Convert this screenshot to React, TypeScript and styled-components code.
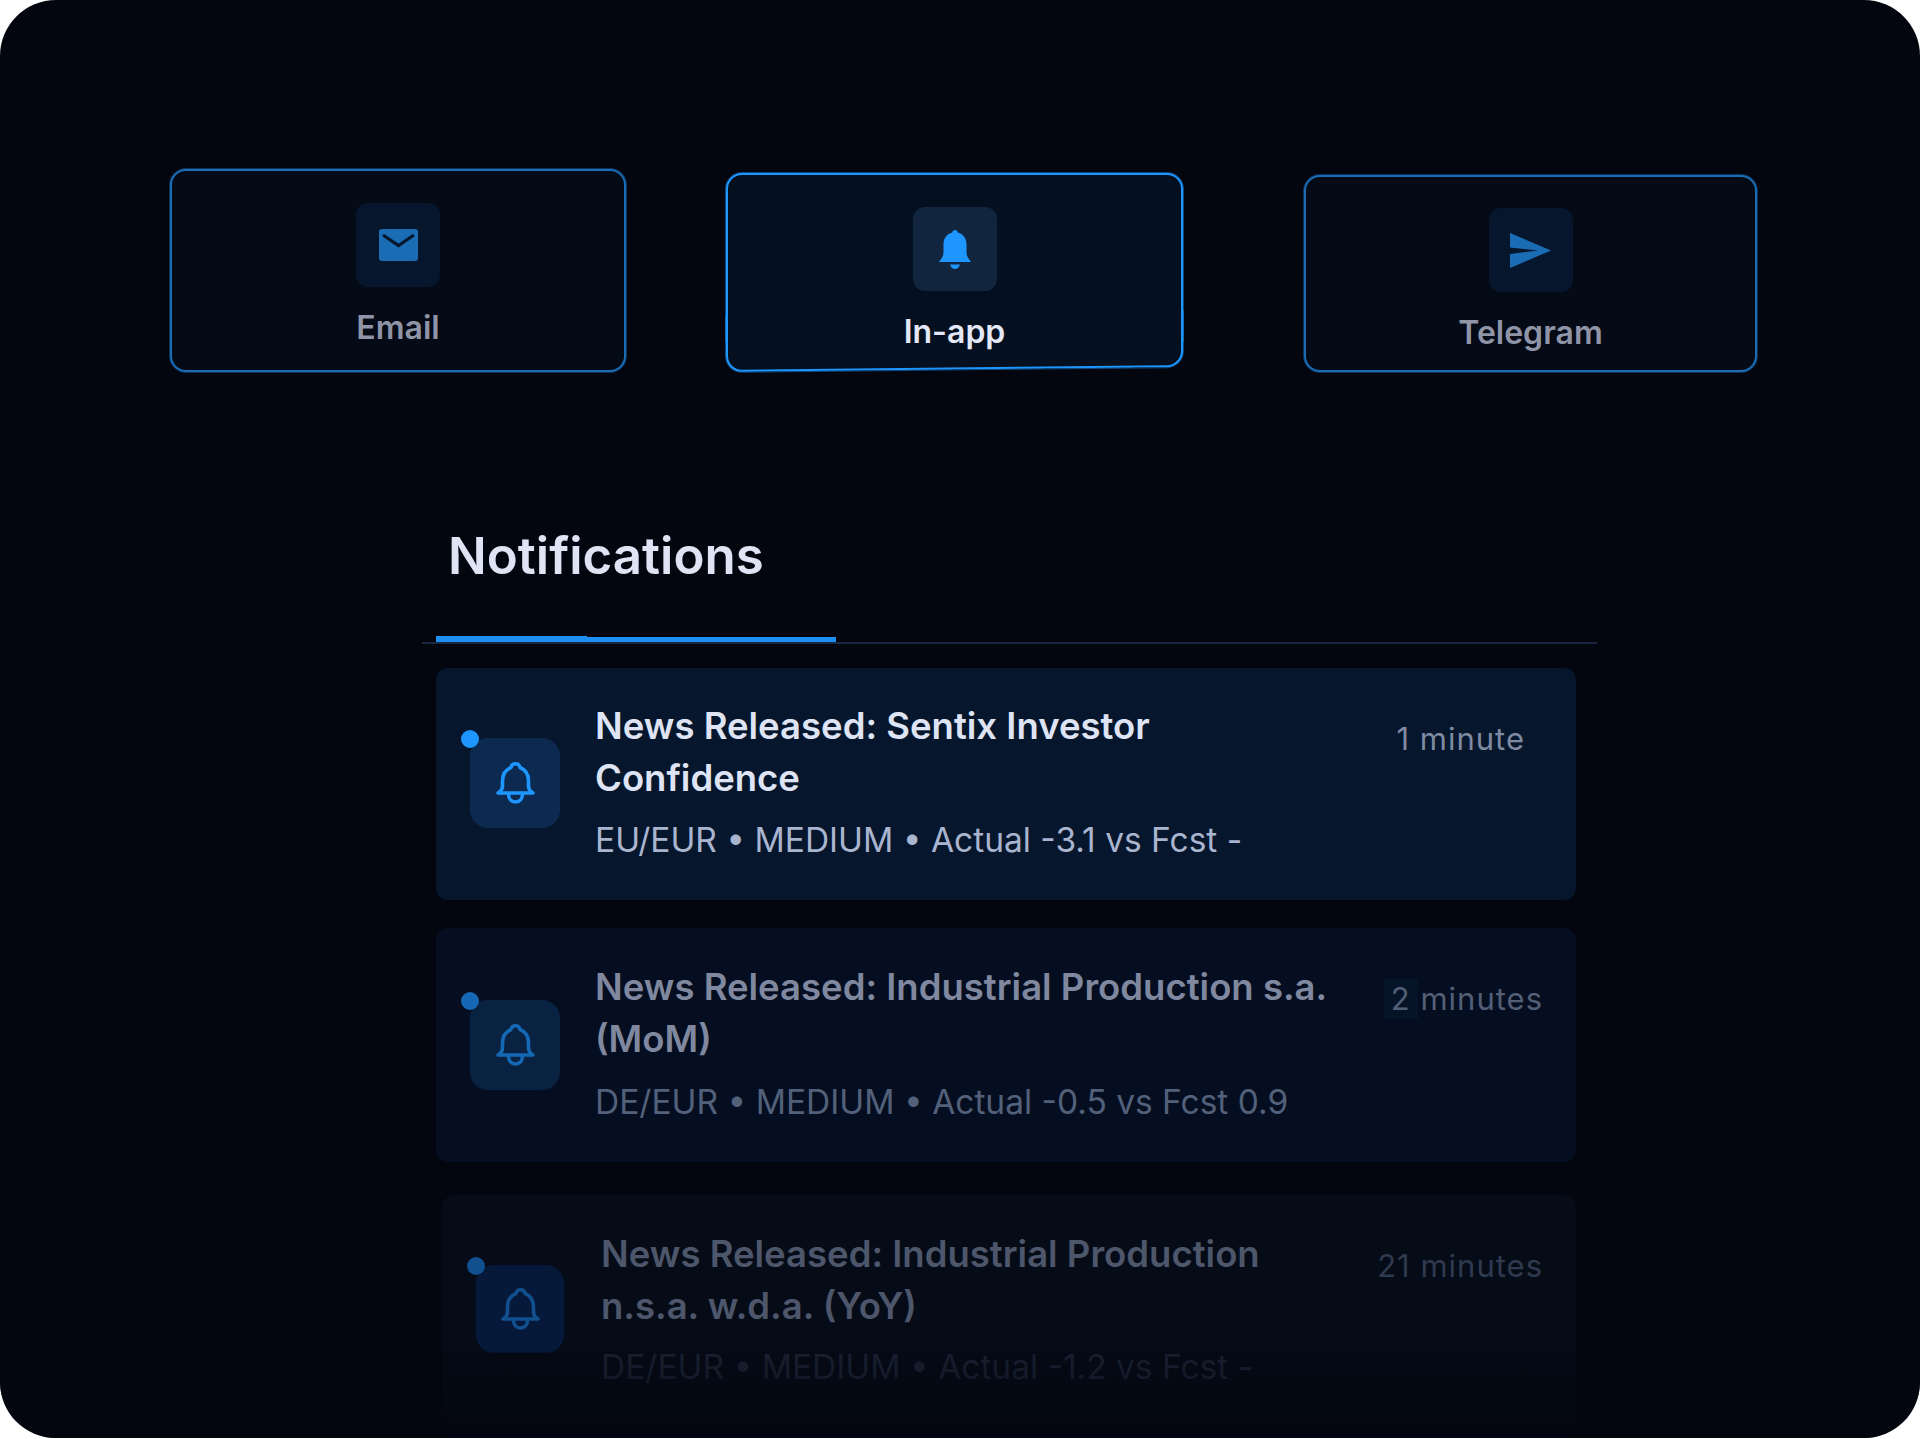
import styled, { createGlobalStyle } from 'styled-components';

const GlobalStyle = createGlobalStyle`
html, body {
    margin: 0;
    background: #fff;
}
`;

interface Tone {
    card: string;
    tile: string;
    accent: string;
    title: string;
    meta: string;
    time: string;
}

const tones: Record<'fresh' | 'recent' | 'old', Tone> = {
    fresh: { card: '#06162c', tile: '#0c2a4f', accent: '#1e96ff', title: '#dfe4f5', meta: '#a9b5cf', time: '#7f8aa1' },
    recent: { card: '#050e20', tile: '#0a2242', accent: '#1568b3', title: '#7f889f', meta: '#52607a', time: '#535f77' },
    old: { card: '#050c18', tile: '#06193a', accent: '#114f8e', title: '#4d566a', meta: '#222c40', time: '#2f3a4f' },
};

function MailGlyph() {
    return (
        <svg width="39" height="32" viewBox="0 0 39 32">
            <rect width="39" height="32" rx="3" fill="#1a6cb5" />
            <path d="M4 6 L19.5 16.5 L35 6" fill="none" stroke="#06162c" strokeWidth="3.2" />
        </svg>
    );
}

function SolidBell() {
    return (
        <svg width="32" height="39" viewBox="0 0 32 39" fill="#1e96ff">
            <path d="M16 0C17.5 0 18.5 1 18.8 2.6C24 4 27.5 8.5 27.5 14V22C27.5 26 29 28 32 32H0C3 28 4.5 26 4.5 22V14C4.5 8.5 8 4 13.2 2.6C13.5 1 14.5 0 16 0Z" />
            <path d="M11 34.5H21C20 37.5 18.2 39 16 39C13.8 39 12 37.5 11 34.5Z" />
        </svg>
    );
}

function SendGlyph() {
    return (
        <svg width="41" height="35" viewBox="0 0 41 35">
            <path d="M0 0L41 17.5L0 35V21L28 17.5L0 14.5Z" fill="#1a6cb5" />
        </svg>
    );
}

function OutlineBell({ color }: { color: string }) {
    return (
        <svg width="39" height="42" viewBox="0 0 39 42" fill="none" stroke={color} strokeWidth="3.6" strokeLinecap="round" strokeLinejoin="round">
            <path d="M2 31H37" />
            <path d="M3 30.5C5 29 6.5 27 6.5 24V19C6.5 12 10 7.5 15 5.5C15.5 3 17 1.8 19.5 1.8C22 1.8 23.5 3 24 5.5C29 7.5 32.5 12 32.5 19V24C32.5 27 34 29 36 30.5" />
            <path d="M12.5 32C12.5 37 15.5 40 19.5 40C23.5 40 26.5 37 26.5 32" />
        </svg>
    );
}

export default function App() {
    return (
        <Panel>
            <GlobalStyle />
            <Channels>
                <ChannelCard $width={456} $height={203} $top={0} $pad={32}>
                    <ChannelTile $bg="#06162c"><MailGlyph /></ChannelTile>
                    <ChannelLabel $color="#8f94a6">Email</ChannelLabel>
                </ChannelCard>
                <SlantedCard $width={457} $height={199} $top={4} $pad={34}>
                    <ChannelTile $bg="#12253f"><SolidBell /></ChannelTile>
                    <ChannelLabel $color="#e4e8f6">In-app</ChannelLabel>
                </SlantedCard>
                <ChannelCard $width={453} $height={197} $top={6} $pad={31}>
                    <ChannelTile $bg="#06162c"><SendGlyph /></ChannelTile>
                    <ChannelLabel $color="#8f94a6">Telegram</ChannelLabel>
                </ChannelCard>
            </Channels>

            <Heading>Notifications</Heading>
            <TabRail><TabMark /></TabRail>

            <List>
                <Item $tone={tones.fresh} $top={32} $inset={51}>
                    <Tile $tone={tones.fresh} $size={90} $offset={38}>
                        <Dot $color={tones.fresh.accent} />
                        <OutlineBell color={tones.fresh.accent} />
                    </Tile>
                    <Copy>
                        <Title $color={tones.fresh.title}>News Released: Sentix Investor Confidence</Title>
                        <Meta $color={tones.fresh.meta} $gap={16}>EU/EUR • MEDIUM • Actual -3.1 vs Fcst -</Meta>
                    </Copy>
                    <Time $color={tones.fresh.time} $top={19}>1 minute</Time>
                </Item>
                <Item $tone={tones.recent} $top={33} $inset={33}>
                    <Tile $tone={tones.recent} $size={90} $offset={39}>
                        <Dot $color={tones.recent.accent} />
                        <OutlineBell color={tones.recent.accent} />
                    </Tile>
                    <Copy>
                        <Title $color={tones.recent.title}>News Released: Industrial Production s.a. (MoM)</Title>
                        <Meta $color={tones.recent.meta} $gap={17}>DE/EUR • MEDIUM • Actual -0.5 vs Fcst 0.9</Meta>
                    </Copy>
                    <Time $color={tones.recent.time} $top={18}><TimeMark>2</TimeMark> minutes</Time>
                </Item>
                <OldItem $tone={tones.old} $top={33} $inset={33}>
                    <Tile $tone={tones.old} $size={88} $offset={37}>
                        <Dot $color={tones.old.accent} />
                        <OutlineBell color={tones.old.accent} />
                    </Tile>
                    <Copy>
                        <Title $color={tones.old.title}>News Released: Industrial Production n.s.a. w.d.a. (YoY)</Title>
                        <Meta $color={tones.old.meta} $gap={15}>DE/EUR • MEDIUM • Actual -1.2 vs Fcst -</Meta>
                    </Copy>
                    <Time $color={tones.old.time} $top={18}>21 minutes</Time>
                </OldItem>
            </List>
            <BottomFade />
        </Panel>
    );
}

const Panel = styled.div`
position: relative;
width: 1920px;
height: 1438px;
overflow: hidden;
box-sizing: border-box;
padding-top: 169px;
border-radius: 56px;
background: #03050f;
font-family: Inter, "Liberation Sans", sans-serif;
`;

const Channels = styled.div`
display: flex;
align-items: flex-start;
gap: 100px;
height: 203px;
padding-left: 170px;
`;

const ChannelCard = styled.div<{$width: number; $height: number; $top: number; $pad: number}>`
position: relative;
flex: none;
display: flex;
flex-direction: column;
align-items: center;
gap: 23px;
box-sizing: border-box;
width: ${p => p.$width}px;
height: ${p => p.$height}px;
margin-top: ${p => p.$top}px;
padding-top: ${p => p.$pad}px;
border: 2px solid #1a6cb5;
box-shadow: 0 0 0 1px rgba(26, 108, 181, .45);
border-radius: 16px;
background: #040a16;

&:last-child {
    margin-left: 21px;
}
`;

// only the lower edge of this card runs at a slant, so it is built from two pieces
const SlantedCard = styled(ChannelCard)`
border: none;
box-shadow: none;
background: none;
isolation: isolate;

&::before {
    content: '';
    position: absolute;
    inset: 0 0 30px 0;
    z-index: -1;
    border: 2px solid #1e96ff;
    border-bottom: none;
    border-radius: 16px 16px 0 0;
    background: #04101f;
    box-shadow: 0 0 0 1px rgba(30, 150, 255, .45);
    clip-path: inset(-2px -2px 0 -2px);
}

&::after {
    content: '';
    position: absolute;
    left: 0;
    right: 0;
    bottom: 0;
    height: 60px;
    box-sizing: border-box;
    z-index: -1;
    border: 2px solid #1e96ff;
    border-top: none;
    border-radius: 0 0 16px 16px;
    background: #04101f;
    box-shadow: 0 0 0 1px rgba(30, 150, 255, .45);
    clip-path: inset(3px -2px -2px -2px);
    transform-origin: left bottom;
    transform: skewY(-0.63deg);
}
`;

const ChannelTile = styled.div<{$bg: string}>`
display: flex;
align-items: center;
justify-content: center;
width: 84px;
height: 84px;
border-radius: 12px;
background: ${p => p.$bg};
`;

const ChannelLabel = styled.div<{$color: string}>`
font-size: 32px;
line-height: 36px;
font-weight: 600;
color: ${p => p.$color};
`;

const Heading = styled.h1`
margin: 154px 0 0 448px;
font-size: 51px;
line-height: 60px;
font-weight: 600;
color: #dfe4f5;
`;

const TabRail = styled.div`
position: relative;
width: 1175px;
height: 2px;
margin: 56px 0 0 422px;
background: #1a2740;
`;

const TabMark = styled.div`
position: absolute;
left: 14px;
bottom: 2px;
width: 400px;
height: 5px;
background: #1e8ff2;

&::before {
    content: '';
    position: absolute;
    left: 0;
    top: -1px;
    width: 151px;
    height: 1px;
    background: #1e8ff2;
}
`;

const List = styled.div`
display: flex;
flex-direction: column;
gap: 28px;
width: 1140px;
margin: 24px 0 0 436px;
`;

const Item = styled.div<{$tone: Tone; $top: number; $inset: number}>`
display: flex;
align-items: flex-start;
box-sizing: border-box;
padding: ${p => p.$top}px ${p => p.$inset}px 40px 34px;
border-radius: 12px;
background: ${p => p.$tone.card};
`;

const OldItem = styled(Item)`
height: 243px;
margin: 5px 0 0 6px;
`;

const Tile = styled.div<{$tone: Tone; $size: number; $offset: number}>`
position: relative;
flex: none;
display: flex;
align-items: center;
justify-content: center;
width: ${p => p.$size}px;
height: ${p => p.$size}px;
margin: ${p => p.$offset}px ${p => 125 - p.$size}px 0 0;
border-radius: 18px;
background: ${p => p.$tone.tile};
`;

const Dot = styled.span<{$color: string}>`
position: absolute;
left: -9px;
top: -8px;
width: 18px;
height: 18px;
border-radius: 50%;
background: ${p => p.$color};
`;

const Copy = styled.div`
flex: none;
width: 740px;
`;

const Title = styled.div<{$color: string}>`
font-size: 36.5px;
line-height: 52px;
font-weight: 600;
color: ${p => p.$color};
`;

const Meta = styled.div<{$color: string; $gap: number}>`
margin-top: ${p => p.$gap}px;
font-size: 33.5px;
line-height: 40px;
color: ${p => p.$color};
`;

const Time = styled.div<{$color: string; $top: number}>`
margin: ${p => p.$top}px 0 0 auto;
font-size: 31px;
line-height: 40px;
letter-spacing: 1px;
white-space: nowrap;
color: ${p => p.$color};
`;

const TimeMark = styled.span`
display: inline-block;
padding: 0 7px;
margin: 0 -7px;
background: #061428;
`;

const BottomFade = styled.div`
position: absolute;
left: 0;
right: 0;
bottom: 0;
height: 86px;
background: linear-gradient(180deg, rgba(3, 5, 15, .35) 0%, rgba(3, 5, 15, .8) 100%);
`;
